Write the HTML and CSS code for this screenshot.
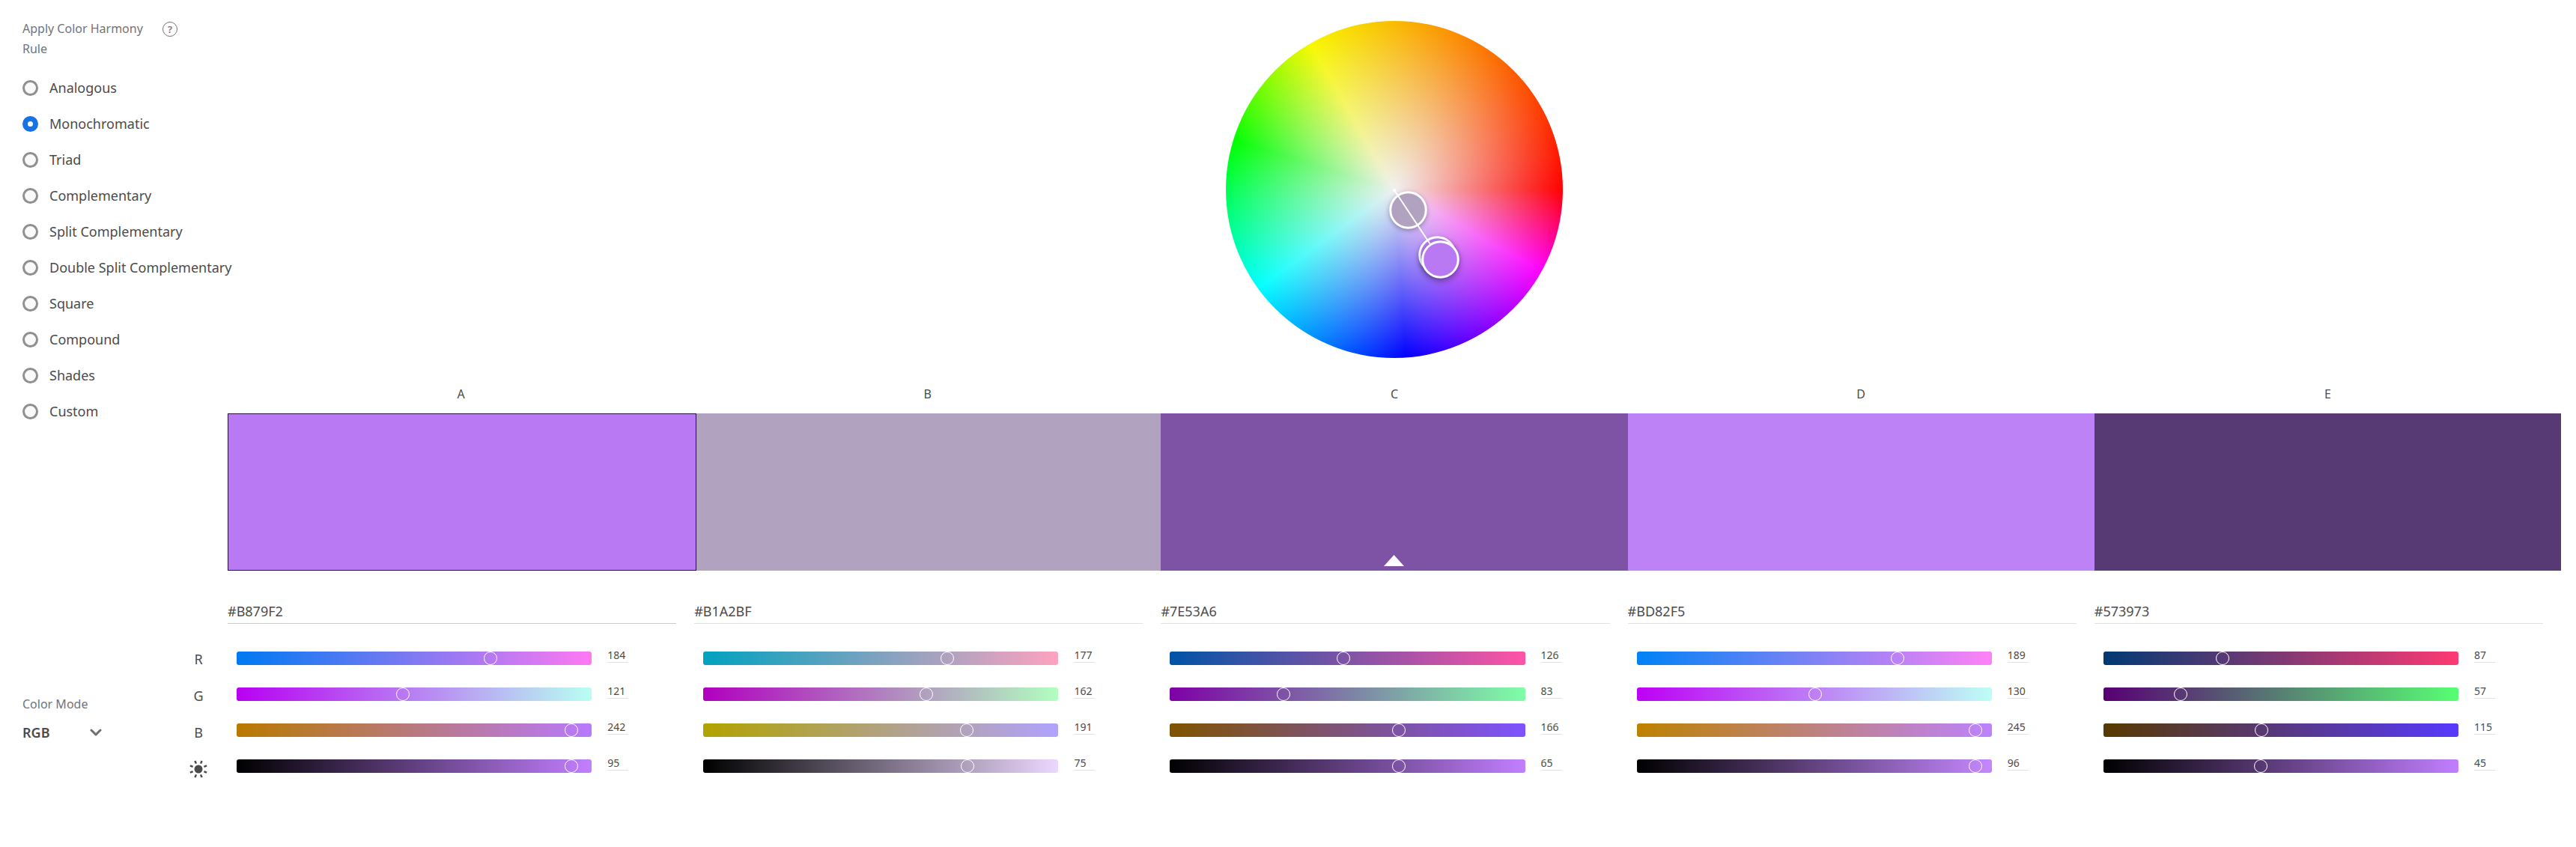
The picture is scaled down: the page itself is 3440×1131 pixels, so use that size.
FILE: index.html
```html
<!DOCTYPE html>
<html lang="en">
<head>
<meta charset="utf-8">
<title>Color wheel</title>
<link rel="stylesheet" href="styles.css">
</head>
<body>
<div class="page">
  <aside class="harmony">
    <fieldset class="rules" aria-labelledby="rules-title">
      <div class="rules-head">
        <span class="caption rules-title" id="rules-title">Apply Color Harmony Rule</span>
        <button class="help" type="button" aria-label="About harmony rules">?</button>
      </div>
      <label class="rule"><input type="radio" name="rule">Analogous</label>
      <label class="rule"><input type="radio" name="rule" checked>Monochromatic</label>
      <label class="rule"><input type="radio" name="rule">Triad</label>
      <label class="rule"><input type="radio" name="rule">Complementary</label>
      <label class="rule"><input type="radio" name="rule">Split Complementary</label>
      <label class="rule"><input type="radio" name="rule">Double Split Complementary</label>
      <label class="rule"><input type="radio" name="rule">Square</label>
      <label class="rule"><input type="radio" name="rule">Compound</label>
      <label class="rule"><input type="radio" name="rule">Shades</label>
      <label class="rule"><input type="radio" name="rule">Custom</label>
    </fieldset>
  </aside>

  <main class="theme">
    <div class="wheel">
      <svg class="markers" viewBox="0 0 450 450" aria-hidden="true">
        <g class="marker"><circle cx="243.500" cy="252.500" r="23.750" fill="#b1a2bf"/></g>
        <g class="marker"><circle cx="282.500" cy="312.500" r="23.750" fill="#b77bf3"/></g>
        <path d="M225 226 286.500 318.500" stroke="#fff" stroke-width="2"/>
        <circle cx="225" cy="226" r="2" fill="#fff"/>
        <g class="marker front"><circle cx="286.500" cy="318.500" r="23.750" fill="#b879f2"/></g>
      </svg>
    </div>
    <div class="swatches">
      <div class="swatch-col"><span class="letter" id="a">A</span><div class="swatch active" style="background:#b879f2"></div></div>
      <div class="swatch-col"><span class="letter" id="b">B</span><div class="swatch" style="background:#b1a2bf"></div></div>
      <div class="swatch-col"><span class="letter" id="c">C</span><div class="swatch" style="background:#7e53a6"><svg class="base" viewBox="0 0 27 15" aria-hidden="true"><path d="M13.500 0 27 15H0z" fill="#fff"/></svg></div></div>
      <div class="swatch-col"><span class="letter" id="d">D</span><div class="swatch" style="background:#bd82f5"></div></div>
      <div class="swatch-col"><span class="letter" id="e">E</span><div class="swatch" style="background:#573973"></div></div>
    </div>
  </main>

  <div class="mode-area">
    <div class="mode">
      <label class="caption" for="mode">Color Mode</label>
      <div class="picker">
        <select id="mode"><option>RGB</option></select>
        <svg class="chevron" viewBox="0 0 16 10" aria-hidden="true"><path d="M2 2l6 6 6-6" fill="none" stroke="#6e6e6e" stroke-width="3" stroke-linecap="round" stroke-linejoin="round"/></svg>
      </div>
    </div>
    <div class="channels">
      <span class="channel" id="red">R</span>
      <span class="channel" id="green">G</span>
      <span class="channel" id="blue">B</span>
      <span class="channel" id="light" aria-label="Brightness">
        <svg class="sun" viewBox="-12 -12 24 24" aria-hidden="true">
          <circle r="5.500" fill="#4b4b4b"/>
          <g stroke="#4b4b4b" stroke-width="2.500">
            <path id="ray" d="M0-8V-12" transform="rotate(22.500)"/>
            <path d="M0-8V-12" transform="rotate(67.500)"/>
            <path d="M0-8V-12" transform="rotate(112.500)"/>
            <path d="M0-8V-12" transform="rotate(157.500)"/>
            <path d="M0-8V-12" transform="rotate(202.500)"/>
            <path d="M0-8V-12" transform="rotate(247.500)"/>
            <path d="M0-8V-12" transform="rotate(292.500)"/>
            <path d="M0-8V-12" transform="rotate(337.500)"/>
          </g>
        </svg>
      </span>
    </div>
  </div>

  <div class="colors">
    <section class="color active-color">
      <input class="hex" value="#B879F2" aria-labelledby="a">
      <div class="row"><div class="bar" style="--from:rgb(0,121,242);--to:rgb(255,121,242)"><input class="range" type="range" max="255" value="184" aria-labelledby="a red"></div><input class="value" value="184" aria-labelledby="a red"></div>
      <div class="row"><div class="bar" style="--from:rgb(184,0,242);--to:rgb(184,255,242)"><input class="range" type="range" max="255" value="121" aria-labelledby="a green"></div><input class="value" value="121" aria-labelledby="a green"></div>
      <div class="row"><div class="bar" style="--from:rgb(184,121,0);--to:rgb(184,121,255)"><input class="range" type="range" max="255" value="242" aria-labelledby="a blue"></div><input class="value" value="242" aria-labelledby="a blue"></div>
      <div class="row"><div class="bar" style="--from:#000;--to:rgb(194,127,255)"><input class="range" type="range" max="100" value="95" aria-labelledby="a light"></div><input class="value" value="95" aria-labelledby="a light"></div>
    </section>
    <section class="color">
      <input class="hex" value="#B1A2BF" aria-labelledby="b">
      <div class="row"><div class="bar" style="--from:rgb(0,162,191);--to:rgb(255,162,191)"><input class="range" type="range" max="255" value="177" aria-labelledby="b red"></div><input class="value" value="177" aria-labelledby="b red"></div>
      <div class="row"><div class="bar" style="--from:rgb(177,0,191);--to:rgb(177,255,191)"><input class="range" type="range" max="255" value="162" aria-labelledby="b green"></div><input class="value" value="162" aria-labelledby="b green"></div>
      <div class="row"><div class="bar" style="--from:rgb(177,162,0);--to:rgb(177,162,255)"><input class="range" type="range" max="255" value="191" aria-labelledby="b blue"></div><input class="value" value="191" aria-labelledby="b blue"></div>
      <div class="row"><div class="bar" style="--from:#000;--mid:#b1a2bf 75%,;--to:rgb(236,216,255)"><input class="range" type="range" max="100" value="75" aria-labelledby="b light"></div><input class="value" value="75" aria-labelledby="b light"></div>
    </section>
    <section class="color">
      <input class="hex" value="#7E53A6" aria-labelledby="c">
      <div class="row"><div class="bar" style="--from:rgb(0,83,166);--to:rgb(255,83,166)"><input class="range" type="range" max="255" value="126" aria-labelledby="c red"></div><input class="value" value="126" aria-labelledby="c red"></div>
      <div class="row"><div class="bar" style="--from:rgb(126,0,166);--to:rgb(126,255,166)"><input class="range" type="range" max="255" value="83" aria-labelledby="c green"></div><input class="value" value="83" aria-labelledby="c green"></div>
      <div class="row"><div class="bar" style="--from:rgb(126,83,0);--to:rgb(126,83,255)"><input class="range" type="range" max="255" value="166" aria-labelledby="c blue"></div><input class="value" value="166" aria-labelledby="c blue"></div>
      <div class="row"><div class="bar" style="--from:#000;--to:rgb(194,127,255)"><input class="range" type="range" max="100" value="65" aria-labelledby="c light"></div><input class="value" value="65" aria-labelledby="c light"></div>
    </section>
    <section class="color">
      <input class="hex" value="#BD82F5" aria-labelledby="d">
      <div class="row"><div class="bar" style="--from:rgb(0,130,245);--to:rgb(255,130,245)"><input class="range" type="range" max="255" value="189" aria-labelledby="d red"></div><input class="value" value="189" aria-labelledby="d red"></div>
      <div class="row"><div class="bar" style="--from:rgb(189,0,245);--to:rgb(189,255,245)"><input class="range" type="range" max="255" value="130" aria-labelledby="d green"></div><input class="value" value="130" aria-labelledby="d green"></div>
      <div class="row"><div class="bar" style="--from:rgb(189,130,0);--to:rgb(189,130,255)"><input class="range" type="range" max="255" value="245" aria-labelledby="d blue"></div><input class="value" value="245" aria-labelledby="d blue"></div>
      <div class="row"><div class="bar" style="--from:#000;--to:rgb(197,135,255)"><input class="range" type="range" max="100" value="96" aria-labelledby="d light"></div><input class="value" value="96" aria-labelledby="d light"></div>
    </section>
    <section class="color">
      <input class="hex" value="#573973" aria-labelledby="e">
      <div class="row"><div class="bar" style="--from:rgb(0,57,115);--to:rgb(255,57,115)"><input class="range" type="range" max="255" value="87" aria-labelledby="e red"></div><input class="value" value="87" aria-labelledby="e red"></div>
      <div class="row"><div class="bar" style="--from:rgb(87,0,115);--to:rgb(87,255,115)"><input class="range" type="range" max="255" value="57" aria-labelledby="e green"></div><input class="value" value="57" aria-labelledby="e green"></div>
      <div class="row"><div class="bar" style="--from:rgb(87,57,0);--to:rgb(87,57,255)"><input class="range" type="range" max="255" value="115" aria-labelledby="e blue"></div><input class="value" value="115" aria-labelledby="e blue"></div>
      <div class="row"><div class="bar" style="--from:#000;--to:rgb(193,126,255)"><input class="range" type="range" max="100" value="45" aria-labelledby="e light"></div><input class="value" value="45" aria-labelledby="e light"></div>
    </section>
  </div>
</div>
</body>
</html>
```

FILE: styles.css
```css
* { box-sizing: border-box; }

body {
  margin: 0;
  background: #fff;
  color: #4b4b4b;
  font-family: "Noto Sans", "Open Sans", sans-serif;
  font-size: 18px;
  line-height: 24px;
}

input, select, button { font: inherit; color: inherit; margin: 0; }

.page {
  display: grid;
  grid-template-columns: 304px minmax(0, 1fr);
  padding-right: 20px;
}

.caption { font-size: 16px; color: #747474; }

/* Harmony rules */
.harmony { padding: 25px 0 0 30px; }
.rules { border: 0; margin: 0; padding: 0; min-width: 0; }
.rules-head { display: flex; align-items: flex-start; gap: 17px; margin-bottom: 14px; }
.rules-title { width: 170px; line-height: 27px; }

.help {
  width: 20px;
  height: 20px;
  margin-top: 4px;
  padding: 0;
  border: 1px solid #747474;
  border-radius: 50%;
  background: none;
  color: #747474;
  font-size: 13px;
  font-weight: 600;
  line-height: 18px;
}

.rule {
  display: flex;
  align-items: center;
  gap: 15px;
  height: 48px;
  white-space: nowrap;
}

.rule input {
  appearance: none;
  flex: none;
  width: 21px;
  height: 21px;
  border: 3px solid #909090;
  border-radius: 50%;
  background: #fafafa;
}
.rule input:checked { border: 7px solid #1473e6; background: #fff; }

/* Wheel and swatches */
.theme { padding-top: 28px; }

.wheel {
  width: 450px;
  height: 450px;
  margin: 0 auto;
  border-radius: 50%;
  background:
    radial-gradient(closest-side, #f0f0f0, rgba(240, 240, 240, 0)),
    conic-gradient(from 90deg, #f00, #f0f 29deg, #00f 86deg, #0ff 144deg, #0f0 197deg, #f8f800 240deg, #f00 360deg);
}

.markers { display: block; width: 100%; height: 100%; }
.marker { stroke: #fff; stroke-width: 3; filter: drop-shadow(0 2px 3px rgba(0, 0, 0, .3)); }
.front { filter: drop-shadow(0 3px 4px rgba(0, 0, 0, .4)); }

.swatches, .colors { display: grid; grid-template-columns: repeat(5, minmax(0, 1fr)); }

.letter {
  display: block;
  padding: 36px 0 14px;
  font-size: 16px;
  text-align: center;
}

.swatch { display: flex; align-items: flex-end; justify-content: center; height: 210px; padding-bottom: 6px; }
.active { position: relative; margin-right: -3px; border: 1px solid #2a0f45; }
.base { width: 27px; height: 15px; }

/* Color mode and channel names */
.mode-area { display: flex; justify-content: space-between; padding: 93px 27px 0 30px; }
.mode { display: flex; flex-direction: column; gap: 10px; padding-top: 73px; }
.picker { display: grid; grid-template-columns: 106px; align-items: center; }
.picker > * { grid-area: 1 / 1; }

.picker select {
  appearance: none;
  height: 32px;
  padding: 0;
  border: 0;
  background: none;
  font-weight: 600;
}
.chevron { width: 16px; height: 10px; justify-self: end; pointer-events: none; }

.channels { display: grid; grid-auto-rows: 49px; width: 24px; }
.channel { display: grid; place-items: center; }
.sun { width: 24px; height: 24px; }

/* Color values */
.colors { padding-top: 38px; }

.hex, .value { border: 0; border-bottom: 1px solid #e1e1e1; padding: 0; background: none; }
.hex { display: block; width: calc(100% - 24px); height: 33px; margin-bottom: 22px; padding-bottom: 1px; }
.active-color .hex { border-color: #cacaca; }

.row { display: flex; align-items: center; gap: 21px; height: 48px; padding: 0 88px 0 12px; }
.value { flex: none; width: 28px; margin-bottom: 9px; height: 21px; font-size: 14px; line-height: 20px; }

.bar {
  flex: 1;
  height: 18px;
  border-radius: 3px;
  background: linear-gradient(to right, var(--from), var(--to));
}

.range {
  appearance: none;
  display: block;
  width: calc(100% + 18px);
  height: 18px;
  margin-left: -12px;
  background: none;
}
.range::-webkit-slider-thumb {
  appearance: none;
  width: 18px;
  height: 18px;
  border: 1px solid #fff;
  border-radius: 50%;
  background: transparent;
}
```
